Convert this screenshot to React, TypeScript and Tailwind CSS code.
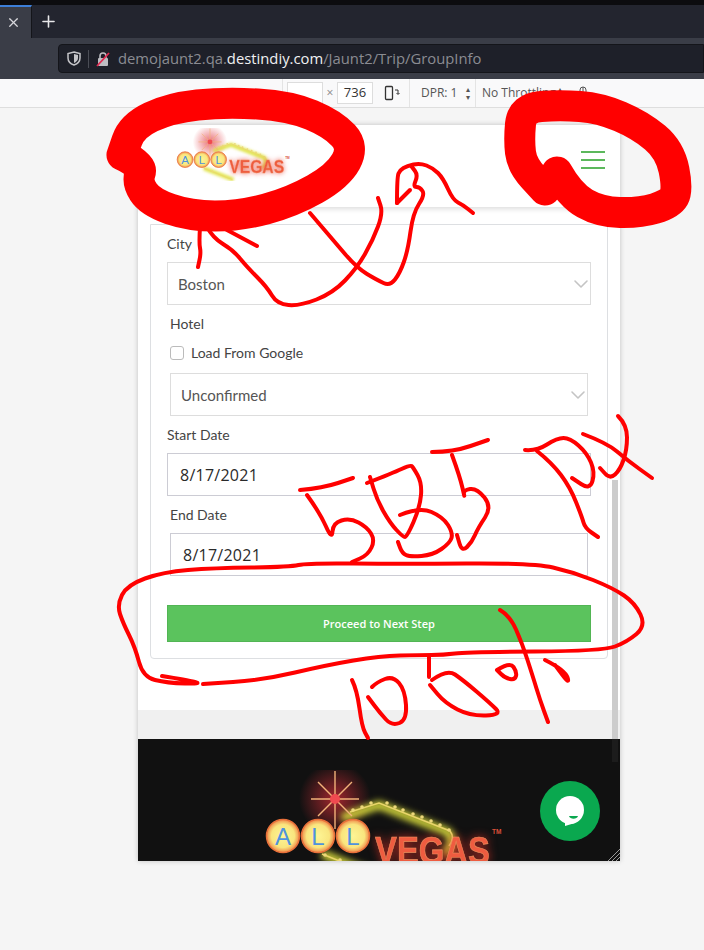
import { ChevronDown, Plus, X } from "lucide-react";

type Pt = [number, number];

// turns a list of traced points into a smooth path
function smooth(pts: Pt[]) {
  let d = `M${pts[0][0]} ${pts[0][1]}`;
  for (let i = 1; i < pts.length - 1; i++) {
    const mx = (pts[i][0] + pts[i + 1][0]) / 2;
    const my = (pts[i][1] + pts[i + 1][1]) / 2;
    d += ` Q${pts[i][0]} ${pts[i][1]} ${mx} ${my}`;
  }
  const last = pts[pts.length - 1];
  return d + ` L${last[0]} ${last[1]}`;
}

const thick: Pt[][] = [
  [[122, 155], [143, 165], [137, 182], [150, 202], [190, 216], [240, 216], [292, 202], [338, 176], [354, 147], [333, 124], [290, 106], [225, 102], [170, 108], [132, 126], [122, 155]],
  [[557, 172], [570, 195], [600, 212], [640, 213], [670, 204], [678, 190], [670, 150], [640, 125], [600, 108], [560, 105], [522, 108], [519, 140], [522, 165], [545, 190]],
];

const thin: Pt[][] = [
  [[200, 227], [199, 243], [201, 253], [198, 267]],
  [[207, 227], [213, 238], [233, 250], [247, 267], [267, 287], [277, 304], [300, 306], [333, 293], [357, 268], [373, 240], [383, 213], [378, 198]],
  [[227, 230], [257, 246]],
  [[310, 213], [333, 240], [357, 268], [377, 280], [390, 286], [400, 273], [408, 250], [413, 213], [425, 195], [420, 187], [413, 187], [418, 175], [412, 167]],
  [[397, 203], [397, 177], [400, 170], [407, 166], [420, 163], [433, 168], [443, 178], [453, 200], [463, 205], [473, 213]],
  [[397, 203], [410, 190]],
  [[300, 490], [323, 488], [353, 478]],
  [[307, 495], [320, 513], [332, 540], [333, 523], [350, 518], [367, 527], [375, 540], [368, 555], [352, 562]],
  [[367, 483], [393, 473], [410, 465], [413, 467], [422, 483], [420, 507], [407, 537], [403, 537], [390, 523], [377, 500], [370, 477]],
  [[400, 515], [420, 507], [443, 517], [453, 533], [450, 543], [433, 555], [410, 557], [402, 553], [398, 542]],
  [[432, 452], [453, 452], [488, 440]],
  [[452, 455], [460, 477], [465, 499], [463, 490], [477, 488], [492, 507], [478, 528], [472, 542], [462, 552], [457, 535]],
  [[525, 450], [537, 451], [557, 438], [570, 438], [587, 453], [595, 472], [590, 490], [572, 478]],
  [[537, 451], [552, 463], [570, 487], [582, 517], [585, 528], [598, 537]],
  [[583, 434], [607, 443], [627, 460], [652, 478]],
  [[618, 416], [627, 425], [627, 450], [620, 470], [610, 479], [600, 468]],
  [[162, 676], [187, 680], [203, 684], [167, 683], [143, 677], [135, 647], [123, 623], [117, 605], [127, 585], [163, 572], [213, 568], [290, 567], [307, 563], [400, 564], [533, 563], [573, 572], [613, 588], [635, 603], [646, 626], [627, 642], [603, 651], [467, 652], [443, 655], [420, 655], [380, 656], [327, 665], [263, 680], [203, 684]],
  [[352, 680], [357, 690], [362, 727], [368, 738]],
  [[372, 687], [377, 682], [393, 676], [405, 690], [407, 720], [392, 726], [380, 713], [368, 697]],
  [[429, 657], [429, 677]],
  [[432, 680], [447, 669], [463, 680], [490, 703], [502, 715], [470, 716], [445, 703], [430, 685]],
  [[497, 670], [510, 662], [517, 672], [515, 680], [505, 678], [497, 670]],
  [[545, 660], [565, 670], [570, 685], [555, 665]],
  [[500, 610], [510, 616], [522, 643], [533, 677], [540, 700], [548, 722]],
];

function Scribbles() {
  return (
    <svg className="absolute left-0 top-0 z-20 pointer-events-none" width="704" height="950" fill="none" stroke="#ff0000" strokeLinecap="round" strokeLinejoin="round">
      {thick.map((p, i) => (
        <path key={i} d={smooth(p)} strokeWidth="31" />
      ))}
      {thin.map((p, i) => (
        <path key={i} d={smooth(p)} strokeWidth="4" />
      ))}
    </svg>
  );
}

function Logo({ id, className }: { id: string; className: string }) {
  const rays = [0, 45, 90, 135];
  const bulbs: Pt[] = [[91, 40], [100, 37], [109, 33], [125, 33], [133, 37], [141, 40], [151, 44], [160, 47], [169, 51], [178, 55], [187, 60], [63, 85], [78, 90]];
  return (
    <svg viewBox="0 0 240 110" className={className}>
      <defs>
        <radialGradient id={`${id}-glow`}>
          <stop offset="0%" stopColor="#e0303a" stopOpacity="0.7" />
          <stop offset="100%" stopColor="#e0303a" stopOpacity="0" />
        </radialGradient>
        <radialGradient id={`${id}-bulb`}>
          <stop offset="0%" stopColor="#fdf595" />
          <stop offset="70%" stopColor="#f9e57e" />
          <stop offset="100%" stopColor="#ef8a4a" />
        </radialGradient>
        <filter id={`${id}-blur`} x="-30%" y="-30%" width="160%" height="160%">
          <feGaussianBlur stdDeviation="3.500" />
        </filter>
      </defs>
      <circle cx="73" cy="29" r="36" fill={`url(#${id}-glow)`} />
      <g filter={`url(#${id}-blur)`} fill="none" stroke="#dfe23e" strokeWidth="8">
        <path d="M80 48 L117 35 L186 62 C192 70 190 78 182 84" />
        <path d="M60 84 L122 108" />
      </g>
      <g stroke="#f2b27a" strokeWidth="1.400">
        {rays.map((r) => (
          <line key={r} x1="73" y1={r === 0 ? 1 : 5} x2="73" y2={r === 0 ? 59 : 53} transform={`rotate(${r} 73 29)`} />
        ))}
      </g>
      <circle cx="73" cy="29" r="5" fill="#f04a50" />
      <path d="M88 42 L117 33 L188 61 C192 66 190 72 187 76" fill="none" stroke="#e9d56a" strokeWidth="1.600" />
      <path d="M60 84 L120 108" fill="none" stroke="#e9d56a" strokeWidth="1.600" />
      {bulbs.map(([x, y], i) => (
        <circle key={i} cx={x} cy={y} r="1.800" fill="#ecd77a" />
      ))}
      {[[21, "A"], [56, "L"], [91, "L"]].map(([x, l]) => (
        <g key={x as number}>
          <circle cx={x as number} cy="66" r="16.500" fill={`url(#${id}-bulb)`} stroke="#e8703a" strokeWidth="1.500" />
          <text x={x as number} y="75" textAnchor="middle" fontFamily="Liberation Sans, sans-serif" fontSize="24" fill="#4f93dd">{l as string}</text>
        </g>
      ))}
      <text x="113" y="94" fontFamily="Liberation Sans, sans-serif" fontWeight="700" fontSize="39" textLength="115" lengthAdjust="spacingAndGlyphs" fill="#ee5c40" stroke="#ef9460" strokeWidth="0.600" filter="drop-shadow(0 0 5px rgba(230,50,40,0.8))">VEGAS</text>
      <text x="230" y="64" fontFamily="Liberation Sans, sans-serif" fontSize="6.500" fontWeight="700" fill="#d9503a">TM</text>
    </svg>
  );
}

function Select({ value, className }: { value: string; className: string }) {
  return (
    <div className={`flex h-[43px] items-center justify-between overflow-hidden border border-[#dddddd] bg-white pl-[10px] text-[15px] text-[#555555] ${className}`}>
      <span className="pt-[1px]">{value}</span>
      <ChevronDown size={24} strokeWidth={1.600} className="-mr-[3px] text-[#c4c4c4]" />
    </div>
  );
}

function DateInput({ className }: { className: string }) {
  return (
    <div className={`flex h-[43px] items-center border border-[#ccccd4] bg-white pl-[12px] font-['Open_Sans',sans-serif] text-[16px] tracking-[0.25px] text-[#2a2a2a] ${className}`}>
      8/17/2021
    </div>
  );
}

function Browser() {
  return (
    <div className="font-['Open_Sans',sans-serif]">
      <div className="h-[5px] bg-[#0c0c0f]" />
      <div className="flex h-[33px] bg-[#23252f]">
        <div className="flex w-[32px] items-center justify-end border-r border-[#14151a] border-t-2 border-t-[#3d7fd9] bg-[#3a3d47] pr-[10px] text-[#d8d8dc]">
          <X size={15} />
        </div>
        <div className="ml-[7px] flex items-center text-[#e8e8ea]">
          <Plus size={19} />
        </div>
      </div>
      <div className="flex h-[41px] items-center bg-[#3a3d47] pl-[58px]">
        <div className="flex h-[29px] flex-1 items-center rounded-l-[4px] border border-[#14151a] bg-[#1e2029] pl-[8px] text-[14.800px] text-[#8b8c92]">
          <svg width="14" height="15" viewBox="0 0 14 15" className="shrink-0">
            <path d="M7 1 L13 2.500 V7 C13 11 10 13 7 14 C4 13 1 11 1 7 V2.500 Z" fill="none" stroke="#c4c4c8" strokeWidth="1.500" />
            <path d="M7 3 L11 4 V7 C11 9.500 9 11 7 12 Z" fill="#c4c4c8" />
          </svg>
          <div className="ml-[7px] mr-[6px] h-[18px] w-px bg-[#4b4d56]" />
          <svg width="16" height="16" viewBox="0 0 16 16" className="shrink-0">
            <path d="M5 7 V5 C5 1 11 1 11 5 V7" fill="none" stroke="#bdbdc2" strokeWidth="1.600" />
            <rect x="3" y="7" width="10" height="8" rx="1" fill="#bdbdc2" />
            <path d="M2 15 L14 2" stroke="#e22850" strokeWidth="1.800" />
          </svg>
          <span className="ml-[7px] whitespace-nowrap">
            demojaunt2.qa.<span className="text-[#f0f0f2]">destindiy.com</span>/Jaunt2/Trip/GroupInfo
          </span>
        </div>
      </div>
      <div className="flex h-[29px] items-center border-b border-[#dedede] bg-[#f9f9fa] pl-[282px] text-[12px] text-[#555555]">
        <div className="flex h-full w-[127px] items-center border-l border-[#e4e4e4] pl-[4px]">
          <div className="h-[22px] w-[36px] border border-[#dddddd] bg-white" />
          <span className="w-[14px] text-center text-[#888888]">×</span>
          <div className="flex h-[22px] w-[36px] items-center justify-center border border-[#dddddd] bg-white text-[13px] text-[#333333]">736</div>
          <svg width="16" height="16" viewBox="0 0 16 16" className="ml-[11px]">
            <rect x="1.500" y="1.500" width="7" height="13" rx="1" fill="none" stroke="#333333" strokeWidth="1.300" />
            <path d="M11 5 H14 V9 M12.500 8 L14 9.500 L15.500 8" fill="none" stroke="#333333" />
          </svg>
        </div>
        <div className="flex h-full w-[66px] items-center justify-between border-l border-[#e4e4e4] pl-[11px] pr-[5px]">
          <span>DPR: 1</span>
          <span className="text-[8px] leading-[8px]">▴<br />▾</span>
        </div>
        <div className="flex h-full w-[93px] items-center border-l border-[#e4e4e4] pl-[6px]">
          <span className="whitespace-nowrap">No Throttling</span>
          <span className="ml-[2px] text-[8px] leading-[8px]">▴<br />▾</span>
        </div>
        <svg width="10" height="14" viewBox="0 0 10 14" className="ml-[10px]" fill="none" stroke="#555555">
          <rect x="2" y="1" width="6" height="11" rx="3" />
          <path d="M5 1 V6" />
        </svg>
      </div>
    </div>
  );
}

export default function App() {
  return (
    <div className="relative h-[950px] overflow-hidden bg-[#f5f5f5] font-['Lato',sans-serif]">
      <Browser />
      <div className="relative ml-[138px] mt-[17px] flex h-[736px] w-[482px] flex-col overflow-hidden bg-white shadow-[0_0_5px_rgba(0,0,0,0.22)]">
        <header className="relative z-10 flex h-[82px] shrink-0 items-start justify-between bg-white pl-[37px] pr-[15px] shadow-[0_2px_5px_rgba(0,0,0,0.14)]">
          <Logo id="top" className="mt-[3px] w-[115px]" />
          <div className="mt-[26px] flex w-[24px] flex-col gap-[6px]">
            <div className="h-[2px] bg-[#5cb85c]" />
            <div className="h-[2px] bg-[#5cb85c]" />
            <div className="h-[2px] bg-[#5cb85c]" />
          </div>
        </header>

        <main className="h-[503px] shrink-0 pl-[12px] pt-[17px]">
          <div className="w-[458px] rounded-b-[4px] border border-[#dddfe2] px-[16px] pb-[16px] pt-[9px] text-[14px] text-[#444444]">
            <div className="h-[20px] leading-[20px]">City</div>
            <Select value="Boston" className="mt-[8px]" />
            <div className="ml-[3px] mt-[9px] h-[20px] leading-[20px]">Hotel</div>
            <label className="ml-[3px] mt-[9px] flex h-[20px] items-center gap-[7px] leading-[20px]">
              <span className="h-[14px] w-[14px] rounded-[3px] border border-[#bbbbbb] bg-white" />
              Load From Google
            </label>
            <Select value="Unconfirmed" className="ml-[3px] mr-[3px] mt-[10px]" />
            <div className="mt-[9px] h-[20px] leading-[20px]">Start Date</div>
            <DateInput className="mt-[8px]" />
            <div className="ml-[3px] mt-[9px] h-[20px] leading-[20px]">End Date</div>
            <DateInput className="ml-[3px] mr-[3px] mt-[8px]" />
            <button className="mt-[29px] flex h-[37px] w-full items-center justify-center border border-[#52b554] bg-[#5bc35d] pt-[1px] font-['Open_Sans',sans-serif] text-[11px] font-semibold text-white">
              Proceed to Next Step
            </button>
          </div>
        </main>

        <div className="h-[29px] shrink-0 bg-[#f0f0f0]" />

        <footer className="relative flex-1 overflow-hidden bg-[#111111] pl-[124px] pt-[31px]">
          <Logo id="big" className="w-[240px]" />
        </footer>

        {/* scrollbar of the emulated page */}
        <div className="absolute right-[2px] top-[355px] h-[282px] w-[6px] bg-[#cccccc]" />
        <div className="absolute bottom-[99px] right-[2px] h-[23px] w-[6px] bg-[#1c1c1c]" />

        <button className="absolute bottom-[20px] right-[20px] flex h-[60px] w-[60px] items-center justify-center rounded-full bg-[#0aa84f]">
          <svg width="30" height="32" viewBox="0 0 30 32">
            <circle cx="15" cy="15" r="14" fill="#ffffff" />
            <path d="M10 24 L10 31 L20 28 Z" fill="#ffffff" />
            <path d="M14 21 H23 C22 24.500 15 24.500 14 21 Z" fill="#0aa84f" />
          </svg>
        </button>

        <svg className="absolute bottom-0 right-0" width="13" height="13" viewBox="0 0 13 13" stroke="#9a9a9a" strokeWidth="1">
          <path d="M1 13 L13 1 M5 13 L13 5 M9 13 L13 9" />
        </svg>
      </div>
      <Scribbles />
    </div>
  );
}
